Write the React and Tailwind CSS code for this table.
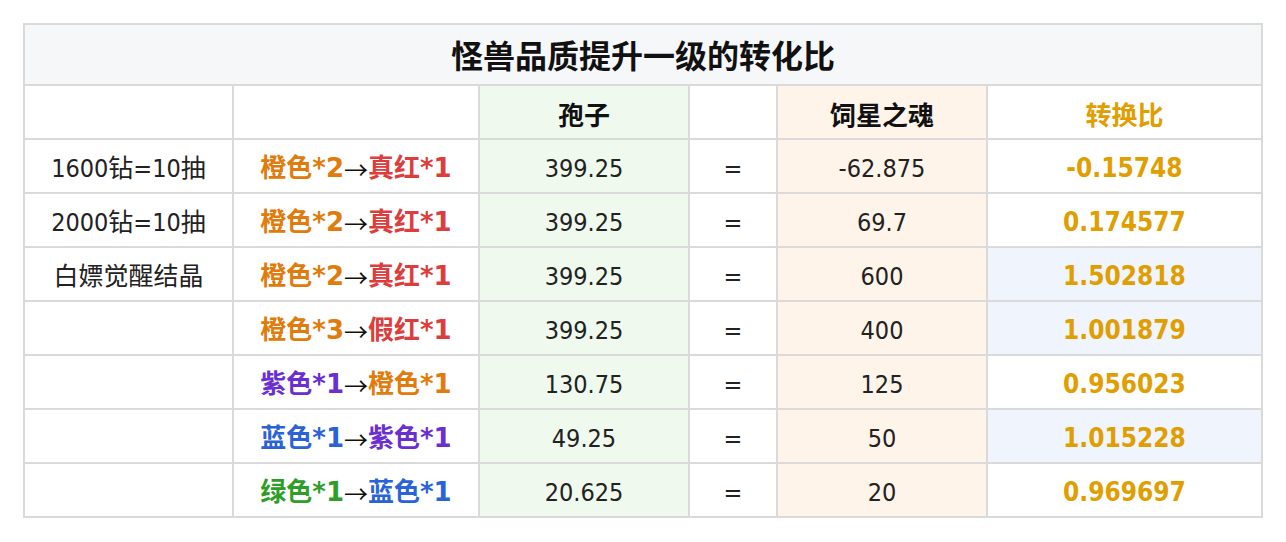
const font = { fontFamily: '"DejaVu Sans Condensed", "Noto Sans CJK SC", sans-serif' };
const wide = { fontFamily: '"DejaVu Sans", "Noto Sans CJK SC", sans-serif' };
const cjk = { fontFamily: '"Noto Sans CJK SC", sans-serif' };

const C = {
  orange: 'text-[#e07b0c]',
  red: 'text-[#dc3d3d]',
  purple: 'text-[#6b2fd1]',
  blue: 'text-[#2a62d8]',
  green: 'text-[#2f9e29]',
};

const rows = [
  { label: '1600钻=10抽', from: ['橙色*2', 'orange'], to: ['真红*1', 'red'], spore: '399.25', soul: '-62.875', ratio: '-0.15748', hl: false },
  { label: '2000钻=10抽', from: ['橙色*2', 'orange'], to: ['真红*1', 'red'], spore: '399.25', soul: '69.7', ratio: '0.174577', hl: false },
  { label: '白嫖觉醒结晶', from: ['橙色*2', 'orange'], to: ['真红*1', 'red'], spore: '399.25', soul: '600', ratio: '1.502818', hl: true },
  { label: '', from: ['橙色*3', 'orange'], to: ['假红*1', 'red'], spore: '399.25', soul: '400', ratio: '1.001879', hl: true },
  { label: '', from: ['紫色*1', 'purple'], to: ['橙色*1', 'orange'], spore: '130.75', soul: '125', ratio: '0.956023', hl: false },
  { label: '', from: ['蓝色*1', 'blue'], to: ['紫色*1', 'purple'], spore: '49.25', soul: '50', ratio: '1.015228', hl: true },
  { label: '', from: ['绿色*1', 'green'], to: ['蓝色*1', 'blue'], spore: '20.625', soul: '20', ratio: '0.969697', hl: false },
];

const cell = 'h-[54px] pt-[5px] flex items-center justify-center border-r-2 border-b-2 border-[#dadada]';

export default function App() {
  return (
    <div className="w-[1286px] h-[542px] bg-white text-[#222] text-[25px]" style={font}>
      <div className="ml-[23px] pt-[23px]">
        <div className="w-[1240px] border-l-2 border-t-2 border-[#dadada] grid grid-cols-[209px_246px_210px_88px_210px_275px]">
          <div className="col-span-6 h-[61px] pt-[4px] flex items-center justify-center bg-[#f6f7f9] border-r-2 border-b-2 border-[#dadada] text-[32px] font-bold text-[#111]">
            怪兽品质提升一级的转化比
          </div>

          <div className={cell}></div>
          <div className={cell}></div>
          <div className={`${cell} pt-[8px] bg-[#eff9ee] text-[26px] font-bold text-[#111]`}>孢子</div>
          <div className={cell}></div>
          <div className={`${cell} pt-[8px] bg-[#fef4ea] text-[26px] font-bold text-[#111]`}>饲星之魂</div>
          <div className={`${cell} pt-[8px] text-[26px] font-bold text-[#e09e00]`}>转换比</div>

          {rows.map((r, i) => (
            <div key={i} className="contents">
              <div className={cell}>{r.label}</div>
              <div className={`${cell} text-[26px] font-bold`} style={wide}>
                <span className={C[r.from[1]]}>{r.from[0]}</span>
                <span className="font-normal text-[#111] text-[24px]" style={cjk}>→</span>
                <span className={C[r.to[1]]}>{r.to[0]}</span>
              </div>
              <div className={`${cell} bg-[#eff9ee]`}>{r.spore}</div>
              <div className={cell}>=</div>
              <div className={`${cell} bg-[#fef4ea]`}>{r.soul}</div>
              <div className={`${cell} text-[26px] font-bold text-[#e09e00] ${r.hl ? 'bg-[#eff4fd]' : ''}`}>{r.ratio}</div>
            </div>
          ))}
        </div>
      </div>
    </div>
  );
}
